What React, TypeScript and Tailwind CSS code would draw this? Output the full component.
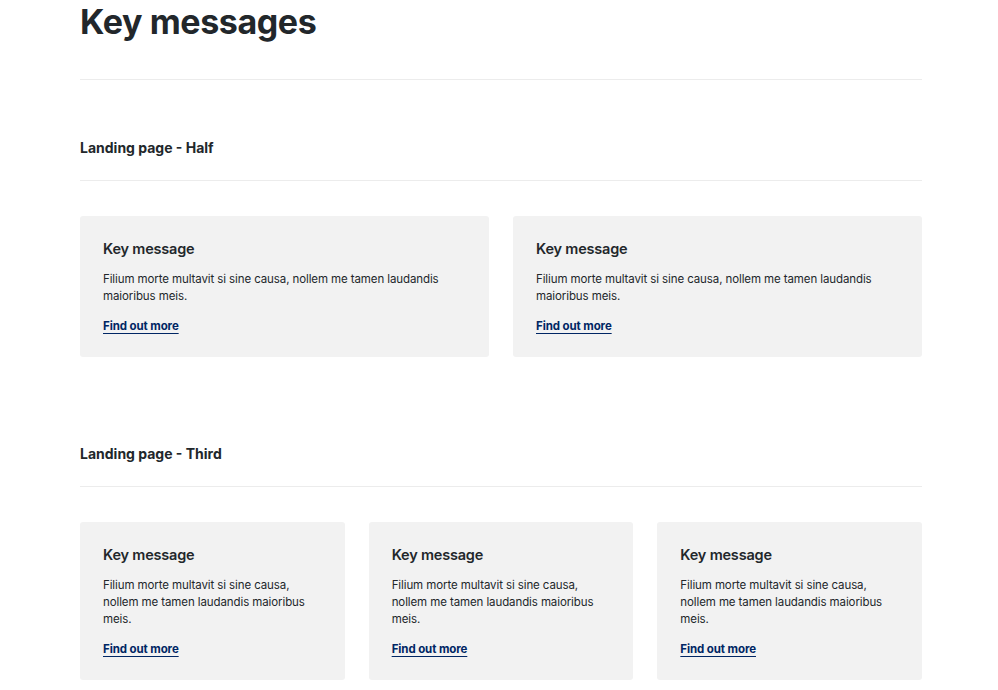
const cards = [1, 2];
const thirds = [1, 2, 3];

function KeyMessageCard() {
  return (
    <div className="bg-[#f2f2f2] rounded-[3px] px-[23px] pt-[23px] pb-[21px]">
      <h3 className="text-[14.5px] leading-[20px] font-semibold tracking-[-0.2px] text-[#22272b]">Key message</h3>
      <p className="mt-[12px] text-[11.5px] leading-[17px] tracking-[-0.1px] text-[#22272b]">
        Filium morte multavit si sine causa, nollem me tamen laudandis maioribus meis.
      </p>
      <a
        href="#"
        className="inline-block mt-[12px] text-[11.5px] leading-[18px] font-bold tracking-[-0.1px] text-[#002664] underline underline-offset-[3px] decoration-[1px]"
      >
        Find out more
      </a>
    </div>
  );
}

export default function App() {
  return (
    <div className="min-h-screen bg-white font-['Inter',sans-serif] text-[#22272b]">
      <div className="mx-[80px] w-[842px]">
        <h1 className="text-[34px] leading-[44px] font-bold tracking-[-0.4px]">Key messages</h1>
        <hr className="mt-[35px] border-t border-[#ececec]" />

        <h2 className="mt-[58px] text-[14px] leading-[20px] font-bold">Landing page - Half</h2>
        <hr className="mt-[22px] border-t border-[#ececec]" />
        <div className="mt-[35px] grid grid-cols-2 gap-[24px]">
          {cards.map((c) => (
            <KeyMessageCard key={c} />
          ))}
        </div>

        <h2 className="mt-[87px] text-[14px] leading-[20px] font-bold">Landing page - Third</h2>
        <hr className="mt-[22px] border-t border-[#ececec]" />
        <div className="mt-[35px] grid grid-cols-3 gap-[24px]">
          {thirds.map((c) => (
            <KeyMessageCard key={c} />
          ))}
        </div>
      </div>
    </div>
  );
}
